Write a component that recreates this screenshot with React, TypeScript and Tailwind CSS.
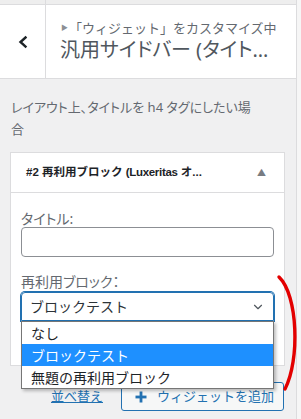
import { ChevronDown } from 'lucide-react';

const options = ['なし', 'ブロックテスト', '無題の再利用ブロック'];

function BackChevron() {
	return (
		<svg width="12" height="14" viewBox="0 0 12 14" fill="none">
			<path d="M8.5 2.5 L3.5 7 L8.5 11.5" stroke="#1d2327" strokeWidth="2.4" strokeLinecap="square" />
		</svg>
	);
}

function PlusIcon() {
	return (
		<svg width="12" height="12" viewBox="0 0 12 12">
			<rect x="4.6" y="0.5" width="2.8" height="11" fill="#2271b1" />
			<rect x="0.5" y="4.6" width="11" height="2.8" fill="#2271b1" />
		</svg>
	);
}

export default function App() {
	return (
		<div className="relative h-[419px] w-[301px] overflow-hidden bg-[#f6f6f6] font-['Noto_Sans','Noto_Sans_CJK_JP',sans-serif] [font-feature-settings:'palt']">
			<div className="flex h-full w-[297px] flex-col border-r border-[#dcdcde] bg-[#f0f0f1]">
				{/* previous section header, scrolled off */}
				<div className="flex h-[5px] border-b border-[#dcdcde] bg-[#eeeeee]">
					<div className="w-[46px] border-r border-[#dcdcde]" />
				</div>

				<div className="flex h-[74px] border-b border-[#dcdcde] bg-white">
					<div className="flex w-[46px] items-center justify-center border-r border-[#dcdcde]">
						<BackChevron />
					</div>
					<div className="min-w-0 flex-1 pl-[15px] pt-[14px]">
						<div className="flex items-center whitespace-nowrap text-[13px] leading-[18px] text-[#646970] [font-feature-settings:normal]">
							<span className="mr-[1px] text-[7px] text-[#8c8f94]">▶</span>
							「ウィジェット」をカスタマイズ中
						</div>
						<div className="-ml-[1px] whitespace-nowrap text-[20px] leading-[26px] text-[#50575e]">
							汎用サイドバー (タイト…
						</div>
					</div>
				</div>

				<p className="mt-[17px] pl-[11px] pr-[8px] text-[13px] leading-[22px] text-[#646970]">
					レイアウト上、タイトルを h4 タグにしたい場
					<br />合
				</p>

				<div className="ml-[10px] mt-[12px] w-[275px] border border-[#dcdcde] bg-white">
					<div className="flex h-[40px] items-center border-b border-[#dcdcde] pl-[15px] pr-[18px]">
						<div className="flex-1 whitespace-nowrap font-['Liberation_Sans','Noto_Sans_CJK_JP',sans-serif] text-[11.5px] font-bold text-[#1d2327] [font-feature-settings:normal]">
							#2 再利用ブロック <span className="tracking-[-0.3px]">(Luxeritas</span> オ...
						</div>
						<span className="text-[9px] text-[#787c82]">▲</span>
					</div>
					<div className="px-[10px] pb-[44px] pt-[18px]">
						<div className="text-[14px] leading-[16px] text-[#646970]">タイトル:</div>
						<div className="h-[30px] rounded-[4px] border border-[#8c8f94] bg-white" />
						<div className="mt-[17px] text-[14px] leading-[16px] text-[#646970]">再利用ブロック：</div>
						<div className="mt-[2px] flex h-[29px] items-center justify-between rounded-t-[4px] border border-[#2271b1] pl-[8px] pr-[8px] shadow-[0_0_0_1px_#2271b1]">
							<span className="text-[14px] text-[#2c3338] [font-feature-settings:normal]">ブロックテスト</span>
							<ChevronDown size={14} strokeWidth={2} color="#50575e" />
						</div>
					</div>
				</div>

				<div className="mt-[16px] flex items-center justify-end gap-[18px] pr-[12px] [font-feature-settings:normal]">
					<span className="text-[13px] text-[#2271b1] underline">並べ替え</span>
					<div className="flex h-[29px] w-[163px] items-center gap-[10px] rounded-[3px] border border-[#2271b1] bg-[#f6f7f7] pl-[13px] text-[13px] text-[#2271b1]">
						<PlusIcon />
						ウィジェットを追加
					</div>
				</div>
			</div>

			{/* native select dropdown, open */}
			<div className="absolute left-[21px] top-[321px] w-[253px] border border-[#767676] bg-white shadow-[2px_2px_3px_rgba(0,0,0,0.25)] [font-feature-settings:normal]">
				{options.map((o, i) => (
					<div
						key={o}
						className={
							i === 1
								? 'flex h-[22px] items-center bg-[#1e90ff] pl-[9px] text-[14px] text-white'
								: 'flex h-[22px] items-center pl-[9px] text-[14px] text-[#1d2327]'
						}
					>
						{o}
					</div>
				))}
			</div>

			{/* red hand-drawn annotation */}
			<svg className="pointer-events-none absolute left-0 top-0" width="301" height="419">
				<path d="M279 277 C298 295 300 360 285 389" stroke="#e30000" strokeWidth="3.4" fill="none" strokeLinecap="round" />
			</svg>
		</div>
	);
}
